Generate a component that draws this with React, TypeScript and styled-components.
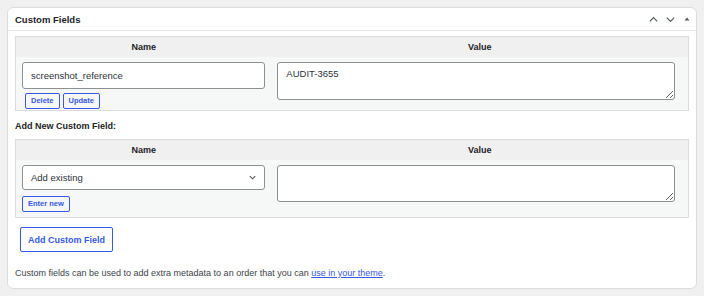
import React from "react";
import styled, { createGlobalStyle } from "styled-components";

const GlobalStyle = createGlobalStyle`
  html, body { margin: 0; padding: 0; background: #f0f0f1; }
  body {
    font-family: "Liberation Sans", Arial, sans-serif;
    color: #3c434a;
  }
  * { box-sizing: border-box; }
`;

const Page = styled.div`
  padding: 7px;
`;

const Postbox = styled.div`
  background: #fff;
  border: 1px solid #dcdcde;
  border-radius: 6px;
  height: 282px;
  display: flex;
  flex-direction: column;
`;

const Header = styled.div`
  height: 23px;
  border-bottom: 1px solid #e4e4e7;
  display: flex;
  align-items: center;
  justify-content: space-between;
  padding: 0 3px 0 7px;
`;

const Title = styled.h2`
  margin: 0;
  font-size: 9.5px;
  font-weight: 700;
  color: #1d2327;
`;

const Actions = styled.div`
  display: flex;
  align-items: center;
  gap: 5px;
  color: #787c82;
`;

const IconBtn = styled.span`
  display: inline-flex;
  width: 12px;
  height: 12px;
  align-items: center;
  justify-content: center;
`;

const Body = styled.div`
  padding: 5px 7px 0;
  display: flex;
  flex-direction: column;
`;

const Table = styled.table`
  width: 100%;
  border: 1px solid #dcdcde;
  border-spacing: 0;
  border-collapse: separate;
  table-layout: fixed;
`;

const Th = styled.th<{ $w?: string }>`
  width: ${(p) => p.$w ?? "auto"};
  background: #f0f0f1;
  height: 20px;
  padding: 0;
  font-size: 9px;
  font-weight: 700;
  color: #1d2327;
  text-align: center;
`;

const Td = styled.td<{ $pb?: number }>`
  background: #f6f7f7;
  vertical-align: top;
  padding: 5px 6px ${(p) => p.$pb ?? 1}px;
`;

const TextInput = styled.input`
  display: block;
  width: 100%;
  height: 27px;
  border: 1px solid #8c8f94;
  border-radius: 3px;
  padding: 0 8px;
  font-family: inherit;
  font-size: 9.5px;
  color: #2c3338;
  background: #fff;
  outline: none;
`;

const SelectBox = styled.div`
  width: 100%;
  height: 25px;
  border: 1px solid #8c8f94;
  border-radius: 3px;
  padding: 0 7px 0 8px;
  font-size: 9.5px;
  color: #2c3338;
  background: #fff;
  display: flex;
  align-items: center;
  justify-content: space-between;
`;

const TextArea = styled.textarea<{ $h: number }>`
  display: block;
  width: calc(100% - 7px);
  height: ${(p) => p.$h}px;
  border: 1px solid #8c8f94;
  border-radius: 3px;
  padding: 5px 8px;
  font-family: inherit;
  font-size: 9.5px;
  color: #2c3338;
  background: #fff;
  outline: none;
  resize: vertical;
`;

const SmallButtons = styled.div<{ $mt: number; $ml: number }>`
  display: flex;
  gap: 3px;
  margin-top: ${(p) => p.$mt}px;
  margin-left: ${(p) => p.$ml}px;
`;

const SmallButton = styled.button`
  height: 16px;
  padding: 0 5px;
  border: 1px solid #3858e9;
  border-radius: 2px;
  background: #f6f7f7;
  color: #3858e9;
  font-family: inherit;
  font-size: 7.5px;
  font-weight: 600;
  line-height: 14px;
  cursor: pointer;
`;

const SubHeading = styled.p`
  margin: 10px 0 8px;
  font-size: 9px;
  font-weight: 700;
  color: #1d2327;
`;

const AddButton = styled.button`
  align-self: flex-start;
  margin: 9px 0 0 5px;
  height: 25px;
  width: 93px;
  padding: 0;
  border: 1px solid #3858e9;
  border-radius: 2px;
  background: #fff;
  color: #3858e9;
  font-family: inherit;
  font-size: 9px;
  font-weight: 600;
  cursor: pointer;
`;

const Help = styled.p`
  margin: 16px 0 0;
  font-size: 9px;
  color: #3c434a;
`;

const Link = styled.a`
  color: #3858e9;
  text-decoration: underline;
`;

const ChevronUp = () => (
  <svg width="11" height="11" viewBox="0 0 12 12" fill="none">
    <path d="M2 8l4-4 4 4" stroke="#50575e" strokeWidth="1.3" />
  </svg>
);
const ChevronDown = () => (
  <svg width="11" height="11" viewBox="0 0 12 12" fill="none">
    <path d="M2 4l4 4 4-4" stroke="#50575e" strokeWidth="1.3" />
  </svg>
);
const Caret = () => (
  <svg width="8" height="8" viewBox="0 0 8 8">
    <path d="M1.5 5.5L4 2.5l2.5 3z" fill="#50575e" />
  </svg>
);
const SelectChevron = () => (
  <svg width="9" height="9" viewBox="0 0 10 10" fill="none">
    <path d="M2 3.5l3 3 3-3" stroke="#50575e" strokeWidth="1.2" />
  </svg>
);

export default function App() {
  return (
    <>
      <GlobalStyle />
      <Page>
        <Postbox>
          <Header>
            <Title>Custom Fields</Title>
            <Actions>
              <IconBtn><ChevronUp /></IconBtn>
              <IconBtn><ChevronDown /></IconBtn>
              <IconBtn><Caret /></IconBtn>
            </Actions>
          </Header>
          <Body>
            <Table>
              <thead>
                <tr>
                  <Th $w="38%">Name</Th>
                  <Th>Value</Th>
                </tr>
              </thead>
              <tbody>
                <tr>
                  <Td>
                    <TextInput defaultValue="screenshot_reference" />
                    <SmallButtons $mt={4} $ml={3}>
                      <SmallButton>Delete</SmallButton>
                      <SmallButton>Update</SmallButton>
                    </SmallButtons>
                  </Td>
                  <Td>
                    <TextArea $h={38} defaultValue="AUDIT-3655" />
                  </Td>
                </tr>
              </tbody>
            </Table>
            <SubHeading>Add New Custom Field:</SubHeading>
            <Table>
              <thead>
                <tr>
                  <Th $w="38%">Name</Th>
                  <Th>Value</Th>
                </tr>
              </thead>
              <tbody>
                <tr>
                  <Td $pb={5}>
                    <SelectBox>
                      <span>Add existing</span>
                      <SelectChevron />
                    </SelectBox>
                    <SmallButtons $mt={6} $ml={0}>
                      <SmallButton>Enter new</SmallButton>
                    </SmallButtons>
                  </Td>
                  <Td>
                    <TextArea $h={37} />
                  </Td>
                </tr>
              </tbody>
            </Table>
            <AddButton>Add Custom Field</AddButton>
            <Help>
              Custom fields can be used to add extra metadata to an order that you can{" "}
              <Link href="#">use in your theme</Link>.
            </Help>
          </Body>
        </Postbox>
      </Page>
    </>
  );
}
